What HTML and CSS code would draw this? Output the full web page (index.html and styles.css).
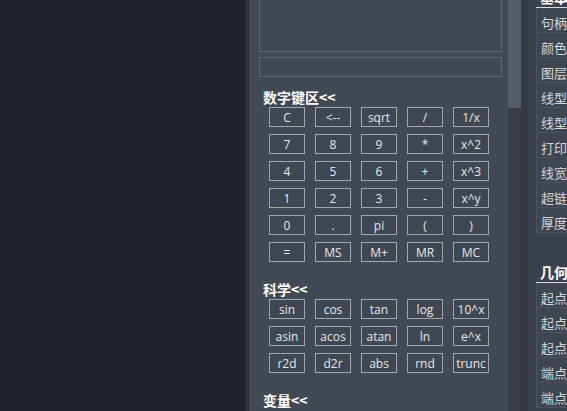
FILE: index.html
```html
<!DOCTYPE html>
<html lang="zh">
<head>
<meta charset="utf-8">
<link rel="stylesheet" href="styles.css">
</head>
<body>
<div class="canvas"></div>
<div class="edge"></div>
<div class="panel">
  <div class="box box-main"></div>
  <div class="box box-input"></div>

  <div class="section-title">数字键区&lt;&lt;</div>
  <div class="keys">
    <div class="key">C</div><div class="key">&lt;--</div><div class="key">sqrt</div><div class="key">/</div><div class="key">1/x</div>
    <div class="key">7</div><div class="key">8</div><div class="key">9</div><div class="key">*</div><div class="key">x^2</div>
    <div class="key">4</div><div class="key">5</div><div class="key">6</div><div class="key">+</div><div class="key">x^3</div>
    <div class="key">1</div><div class="key">2</div><div class="key">3</div><div class="key">-</div><div class="key">x^y</div>
    <div class="key">0</div><div class="key">.</div><div class="key">pi</div><div class="key">(</div><div class="key">)</div>
    <div class="key">=</div><div class="key">MS</div><div class="key">M+</div><div class="key">MR</div><div class="key">MC</div>
  </div>

  <div class="section-title gap">科学&lt;&lt;</div>
  <div class="keys">
    <div class="key">sin</div><div class="key">cos</div><div class="key">tan</div><div class="key">log</div><div class="key">10^x</div>
    <div class="key">asin</div><div class="key">acos</div><div class="key">atan</div><div class="key">ln</div><div class="key">e^x</div>
    <div class="key">r2d</div><div class="key">d2r</div><div class="key">abs</div><div class="key">rnd</div><div class="key">trunc</div>
  </div>

  <div class="section-title gap">变量&lt;&lt;</div>
</div>
<div class="scroll"><div class="thumb"></div></div>
<div class="divider"></div>
<div class="props">
  <div class="group-title first">基本</div>
  <div class="row">句柄</div>
  <div class="row">颜色</div>
  <div class="row">图层</div>
  <div class="row">线型</div>
  <div class="row">线型</div>
  <div class="row">打印</div>
  <div class="row">线宽</div>
  <div class="row">超链</div>
  <div class="row">厚度</div>
  <div class="group-title second">几何</div>
  <div class="row">起点</div>
  <div class="row">起点</div>
  <div class="row">起点</div>
  <div class="row">端点</div>
  <div class="row">端点</div>
</div>
</body>
</html>
```

FILE: styles.css
```css
html, body {
  margin: 0;
  padding: 0;
  width: 567px;
  height: 411px;
  overflow: hidden;
  background: #1e2128;
}
body {
  display: flex;
  font-family: "Open Sans", "Noto Sans CJK SC", sans-serif;
  color: #e4e6e8;
}
.canvas {
  width: 245px;
  flex: none;
  background: #1e2128;
}
.edge {
  width: 4px;
  flex: none;
  background: #2b2f37;
}
.panel {
  flex: none;
  width: 249px;
  background: #414955;
  padding-left: 10px;
}
.box {
  width: 241px;
  border: 1px solid #5e6773;
}
.box-main {
  height: 60px;
  margin-top: -10px;
}
.box-input {
  height: 18px;
  margin-top: 5px;
}
.section-title {
  font-family: "Noto Sans CJK SC", sans-serif;
  font-weight: bold;
  font-size: 14px;
  line-height: 20px;
  height: 20px;
  color: #ffffff;
  margin-top: 10px;
  padding-left: 4px;
}
.section-title.gap {
  margin-top: 17px;
}
.keys {
  display: grid;
  grid-template-columns: repeat(5, 36px);
  grid-auto-rows: 20px;
  column-gap: 10px;
  row-gap: 7px;
  padding-left: 10px;
}
.key {
  border: 1px solid #a2a7ae;
  box-sizing: border-box;
  display: flex;
  align-items: center;
  justify-content: center;
  font-size: 12px;
  color: #e6e7e9;
  background: #3f4753;
  white-space: nowrap;
}
.scroll {
  width: 13px;
  flex: none;
  background: #3b3d44;
}
.thumb {
  height: 108px;
  background: #555d69;
}
.divider {
  width: 7px;
  flex: none;
  background: #343942;
}
.props {
  flex: 1;
  background: #3b424e;
  padding-left: 8px;
  overflow: hidden;
  font-family: "Noto Sans CJK SC", sans-serif;
}
.group-title {
  font-weight: bold;
  font-size: 14px;
  color: #ffffff;
  height: 20px;
  line-height: 20px;
  padding-top: 4px;
  padding-left: 4px;
  border-bottom: 1px solid #d8dbde;
  white-space: nowrap;
}
.group-title.first {
  margin-top: -17px;
}
.group-title.second {
  margin-top: 25px;
}
.row {
  height: 19px;
  line-height: 20px;
  padding-top: 5px;
  border-bottom: 1px solid #4c5360;
  border-left: 1px solid #4c5360;
  background: #3f4652;
  padding-left: 4px;
  font-size: 13px;
  color: #d3d6da;
  white-space: nowrap;
}
```
